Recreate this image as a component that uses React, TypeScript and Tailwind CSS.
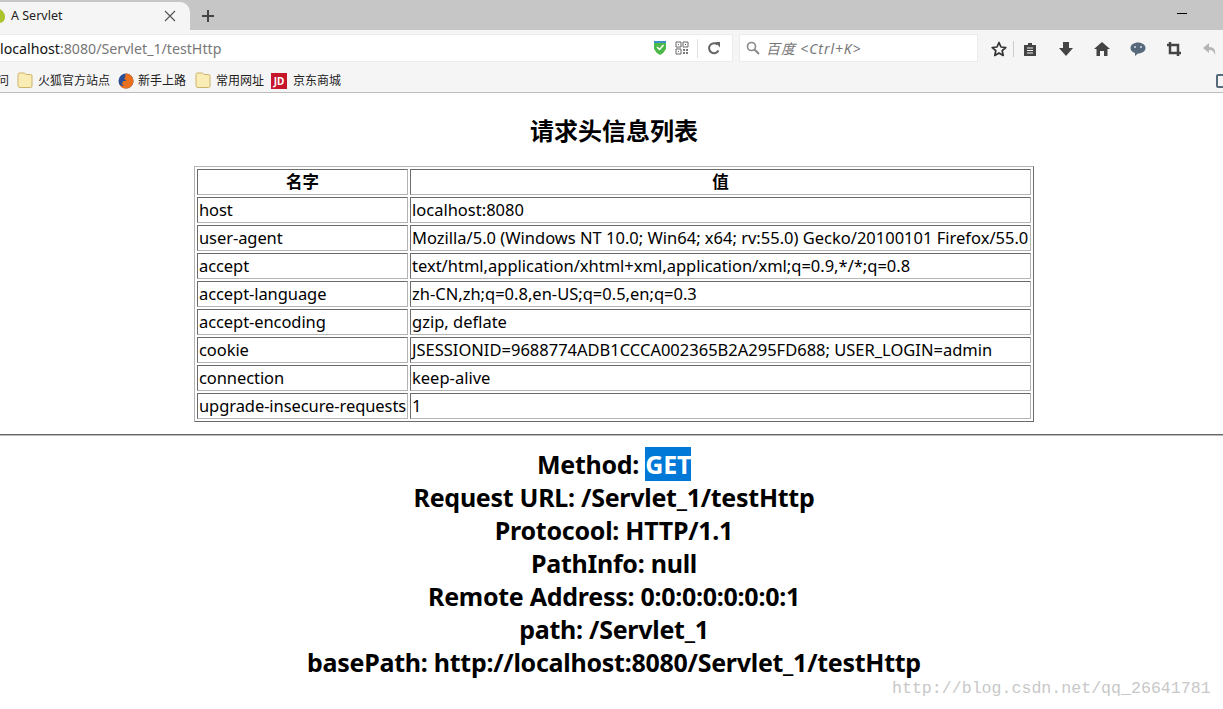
import React from "react";

const rows: [string, string][] = [
  ["host", "localhost:8080"],
  ["user-agent", "Mozilla/5.0 (Windows NT 10.0; Win64; x64; rv:55.0) Gecko/20100101 Firefox/55.0"],
  ["accept", "text/html,application/xhtml+xml,application/xml;q=0.9,*/*;q=0.8"],
  ["accept-language", "zh-CN,zh;q=0.8,en-US;q=0.5,en;q=0.3"],
  ["accept-encoding", "gzip, deflate"],
  ["cookie", "JSESSIONID=9688774ADB1CCCA002365B2A295FD688; USER_LOGIN=admin"],
  ["connection", "keep-alive"],
  ["upgrade-insecure-requests", "1"],
];

const cell = "border border-solid border-t-[#6b6b6b] border-l-[#6b6b6b] border-b-[#b4b4b4] border-r-[#b4b4b4] h-[26px] p-0 px-px leading-[24px] overflow-hidden whitespace-nowrap";

const Folder = () => (
  <svg width="16" height="17" viewBox="0 0 16 17" className="shrink-0">
    <path d="M1 2.500q0-1.500 1.500-1.500h5l1.500 1.500h4.500q1.500 0 1.500 1.500v10q0 1.500-1.500 1.500h-10.500q-2 0-2-2z" fill="#f9ecb4" stroke="#cdb26a" />
  </svg>
);

export default function App() {
  return (
    <div className="w-[1223px] h-[709px] overflow-hidden bg-white relative text-black font-['Noto_Sans','Noto_Sans_CJK_SC',sans-serif]">
      {/* tab strip */}
      <div className="h-[30px] bg-[#c6c6c6] flex items-end pt-[2px]">
        <div className="w-[190px] h-[28px] bg-[#f5f5f5] rounded-tr-[10px] flex items-center shrink-0">
          <svg width="6" height="16" viewBox="0 0 6 16" className="shrink-0">
            <path d="M0 1q5 3 5 8t-5 6z" fill="#a9c42c" />
          </svg>
          <span className="ml-[5px] text-[12.500px] text-[#222] w-[150px]">A Servlet</span>
          <svg width="14" height="14" viewBox="0 0 14 14" className="ml-[2px]">
            <path d="M2 2l10 10M12 2L2 12" stroke="#555" strokeWidth="1.200" />
          </svg>
        </div>
        <div className="h-[28px] flex items-center ml-[11px]">
          <svg width="14" height="14" viewBox="0 0 14 14">
            <path d="M7 1v12M1 7h12" stroke="#444" strokeWidth="2" />
          </svg>
        </div>
        <div className="ml-auto mr-[36px] self-start mt-[11px] w-[10px] h-px bg-black" />
      </div>

      {/* navigation bar */}
      <div className="h-[36px] bg-[#f5f5f5] flex items-center">
        <div className="w-[733px] h-[28px] bg-white border border-l-0 border-[#ececec] flex items-center shrink-0">
          <span className="text-[14.200px] text-[#777] whitespace-nowrap w-[651px] pt-[1px]">
            <span className="text-[#111]">localhost</span>:8080/Servlet_1/testHttp
          </span>
          <svg width="14" height="16" viewBox="0 0 14 16" className="ml-[2px]">
            <path d="M1 1h12v8q-2 4-6 6-4-2-6-6z" fill="#4cb848" />
            <path d="M1 1h12v2H1z" fill="#3f8fc4" />
            <path d="M4 7l2.500 2.500L10.500 5" stroke="#fff" strokeWidth="1.500" fill="none" />
          </svg>
          <svg width="14" height="14" viewBox="0 0 14 14" className="ml-[8px]">
            <path d="M1 1h5v5H1zM8 1h5v5H8zM1 8h5v5H1z" fill="none" stroke="#666" />
            <path d="M3 3h1v1H3zM10 3h1v1h-1zM3 10h1v1H3z" fill="#666" />
            <path d="M8 8h2v2H8zM11 8h2v2h-2zM8 11h2v2H8zM11 11h2v2h-2z" fill="#777" />
          </svg>
          <div className="ml-[8px] w-px h-[19px] bg-[#e0e0e0]" />
          <svg width="14" height="14" viewBox="0 0 14 14" className="ml-[9px]">
            <path d="M11.500 9.500A5 5 0 1 1 10.500 3.500" stroke="#666" strokeWidth="2" fill="none" />
            <path d="M8 1h5v5.500z" fill="#666" />
          </svg>
        </div>
        <div className="ml-[6px] w-[239px] h-[28px] bg-white border border-[#ececec] flex items-center pl-[6px] shrink-0">
          <svg width="14" height="14" viewBox="0 0 14 14">
            <circle cx="5.500" cy="5.500" r="4" fill="none" stroke="#888" strokeWidth="1.600" />
            <path d="M8.500 8.500l4.500 4.500" stroke="#888" strokeWidth="2" />
          </svg>
          <span className="ml-[6px] text-[14px] italic text-[#777] tracking-[0.9px]">百度 &lt;Ctrl+K&gt;</span>
        </div>
        <div className="flex items-center ml-[13px] mt-[1px]">
          <svg width="16" height="16" viewBox="0 0 16 16">
            <path d="M8 1.500l2 4.500 4.800.5-3.600 3.200 1 4.800L8 12l-4.200 2.500 1-4.800L1.200 6.500 6 6z" fill="none" stroke="#333" strokeWidth="1.700" strokeLinejoin="round" />
          </svg>
          <div className="ml-[6px] w-px h-[16px] bg-[#ccc]" />
          <svg width="16" height="16" viewBox="0 0 16 16" className="ml-[8px]">
            <path d="M2 4h4V2h4v2h4v11H2z" fill="#444" />
            <path d="M5 7h6M5 9.500h6M5 12h6" stroke="#f5f5f5" />
          </svg>
          <svg width="16" height="16" viewBox="0 0 16 16" className="ml-[20px]">
            <path d="M5 1h6v6h4l-7 8-7-8h4z" fill="#444" />
          </svg>
          <svg width="16" height="16" viewBox="0 0 16 16" className="ml-[20px]">
            <path d="M8 1l8 7h-2.500v7H10v-5H6v5H2.500V8H0z" fill="#444" />
          </svg>
          <svg width="16" height="16" viewBox="0 0 16 16" className="ml-[20px]">
            <path d="M8 1.500c4 0 7.500 2.300 7.500 5.500S12 12.500 8 12.500L5 15v-3C2.500 11.500.500 9.500.500 7 .500 3.800 4 1.500 8 1.500z" fill="#56697a" />
            <circle cx="5" cy="6" r="1" fill="#dde" />
            <circle cx="11" cy="6" r="1" fill="#dde" />
          </svg>
          <svg width="16" height="16" viewBox="0 0 16 16" className="ml-[20px]">
            <path d="M4 1v11h11M1 4h11v11" fill="none" stroke="#444" strokeWidth="2.500" />
          </svg>
          <svg width="16" height="16" viewBox="0 0 16 16" className="ml-[20px]">
            <path d="M7 2L1 7l6 5V9c3 0 5 1 6 5 1-5-1-8-6-8z" fill="#b5b5b5" />
          </svg>
        </div>
      </div>

      {/* bookmarks bar */}
      <div className="h-[27px] bg-[#f5f5f5] border-b border-[#bdbdbd] flex items-center text-[12px] text-[#222] whitespace-nowrap pt-[3px]">
        <span className="-ml-[3px]">问</span>
        <span className="ml-[8px]"><Folder /></span>
        <span className="ml-[5px]">火狐官方站点</span>
        <svg width="16" height="16" viewBox="0 0 16 16" className="ml-[8px] shrink-0">
          <circle cx="8" cy="8" r="7.500" fill="#2a4f96" />
          <path d="M8 .5a7.500 7.500 0 0 1 7 10c-1 3-4 5-7 5-3.500 0-6-2-7-5 1 1.500 3 3 5 2.500-2-1-2.500-4-.5-5 1 0 2 0 3-.5-1-1-2-1-2.500-2 1-1 2-2 1-3z" fill="#e8701f" />
        </svg>
        <span className="ml-[4px]">新手上路</span>
        <span className="ml-[9px]"><Folder /></span>
        <span className="ml-[5px]">常用网址</span>
        <span className="ml-[7px] w-[16px] h-[16px] bg-[#c6162a] text-white text-[10px] font-bold leading-[16px] text-center shrink-0">JD</span>
        <span className="ml-[6px]">京东商城</span>
        <svg width="7" height="16" viewBox="0 0 7 16" className="ml-auto shrink-0">
          <rect x="1" y="2" width="10" height="12" rx="1" fill="none" stroke="#56697a" strokeWidth="2" />
        </svg>
      </div>

      {/* page */}
      <h1 className="mt-[22px] pl-[5px] text-center text-[24px] font-bold leading-[32px]">请求头信息列表</h1>
      <table className="mt-[19px] ml-[194px] w-[840px] table-fixed border border-solid border-t-[#b4b4b4] border-l-[#b4b4b4] border-b-[#6b6b6b] border-r-[#6b6b6b] border-separate border-spacing-[2px] text-[16.500px]">
        <thead>
          <tr>
            <th className={cell + " w-[211px] font-bold text-center"}>名字</th>
            <th className={cell + " font-bold text-center"}>值</th>
          </tr>
        </thead>
        <tbody>
          {rows.map(([k, v]) => (
            <tr key={k}>
              <td className={cell + " tracking-[-0.08px]"}>{k}</td>
              <td className={cell}>{v}</td>
            </tr>
          ))}
        </tbody>
      </table>
      <hr className="mt-[12px] border-0 border-t border-b border-t-[#666] border-b-[#bbb]" />
      <div className="mt-[12px] pl-[5px] text-center font-bold text-[25px] tracking-[-0.27px] leading-[33px]">
        <div>Method: <span className="bg-[#0078d7] text-white">GET</span></div>
        <div>Request URL: /Servlet_1/testHttp</div>
        <div>Protocool: HTTP/1.1</div>
        <div>PathInfo: null</div>
        <div>Remote Address: 0:0:0:0:0:0:0:1</div>
        <div>path: /Servlet_1</div>
        <div>basePath: http://localhost:8080/Servlet_1/testHttp</div>
      </div>
      <div className="absolute left-[892px] top-[679px] text-[16.600px] leading-[20px] text-[#c8c8c8] font-['Liberation_Mono',monospace] whitespace-nowrap">http://blog.csdn.net/qq_26641781</div>
    </div>
  );
}
